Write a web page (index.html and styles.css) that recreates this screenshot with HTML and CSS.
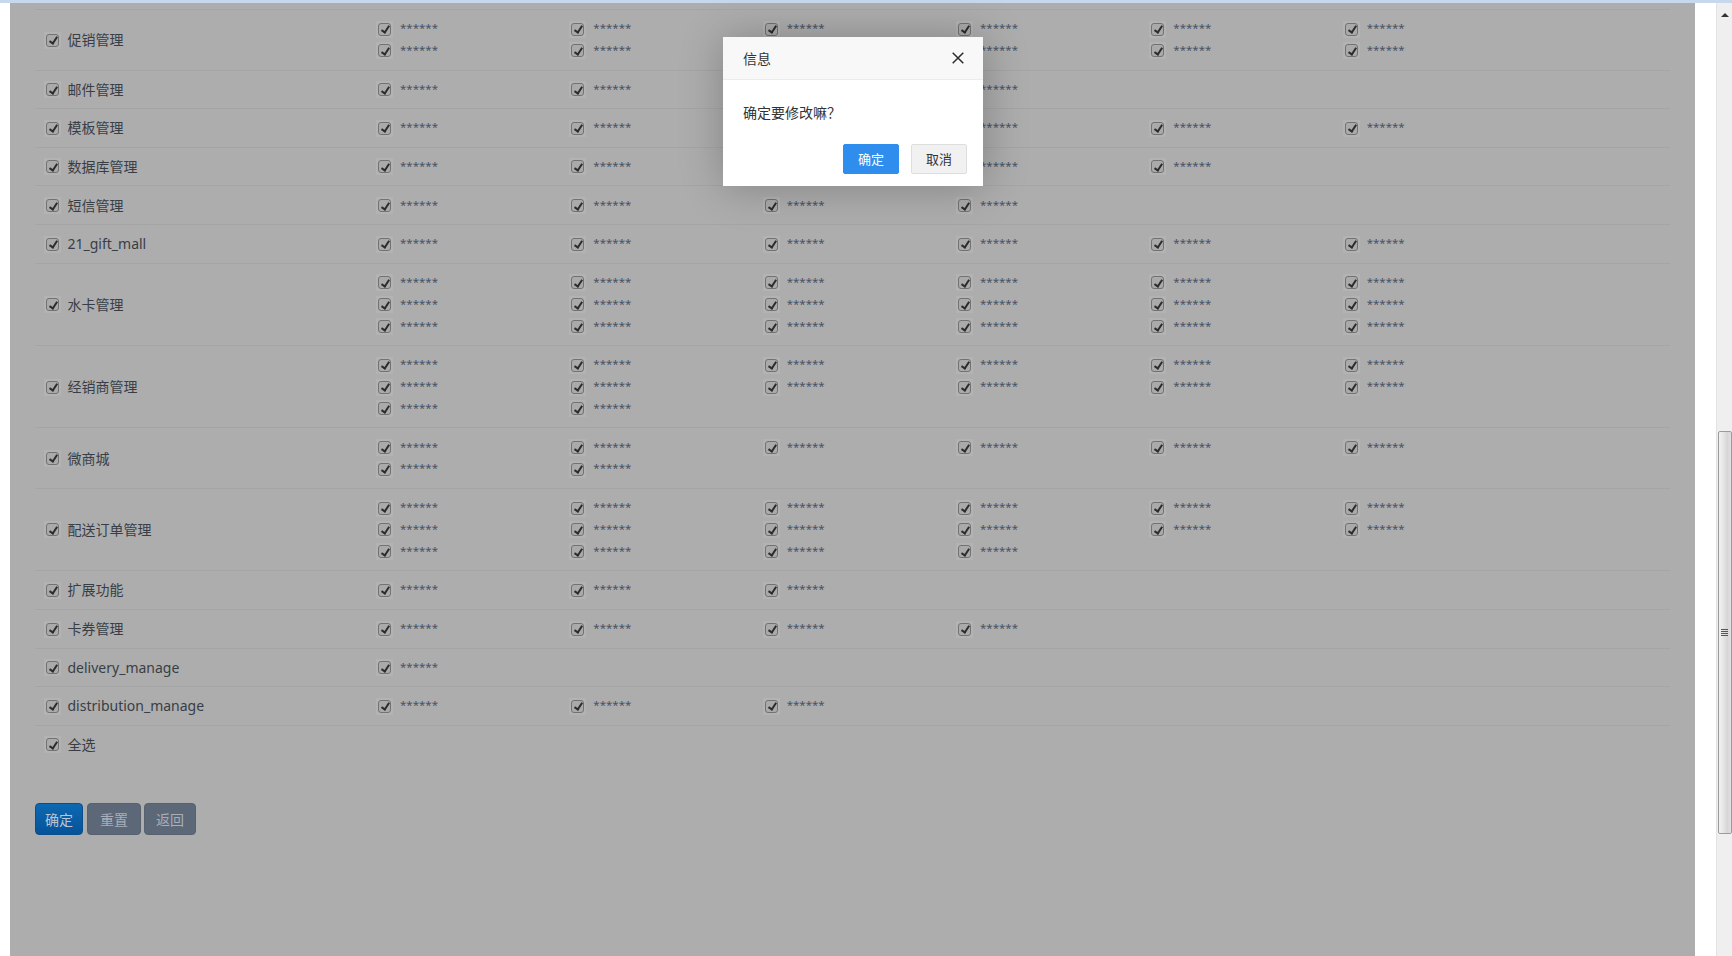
FILE: index.html
```html
<!DOCTYPE html>
<html lang="zh-CN">
<head>
<meta charset="utf-8">
<title>权限设置</title>
<link rel="stylesheet" href="styles.css">
</head>
<body>
<div class="topline"></div>
<div class="screen">
  <div class="gutter-l"></div>
  <main class="frame">
    <div class="toprule"></div>

    <div class="row">
      <label class="mod"><span class="cb"></span>促销管理</label>
      <div class="perms">
        <span class="perm"><span class="cb"></span><span class="stars">******</span></span>
        <span class="perm"><span class="cb"></span><span class="stars">******</span></span>
        <span class="perm"><span class="cb"></span><span class="stars">******</span></span>
        <span class="perm"><span class="cb"></span><span class="stars">******</span></span>
        <span class="perm"><span class="cb"></span><span class="stars">******</span></span>
        <span class="perm"><span class="cb"></span><span class="stars">******</span></span>
        <span class="perm"><span class="cb"></span><span class="stars">******</span></span>
        <span class="perm"><span class="cb"></span><span class="stars">******</span></span>
        <span class="perm"><span class="cb"></span><span class="stars">******</span></span>
        <span class="perm"><span class="cb"></span><span class="stars">******</span></span>
        <span class="perm"><span class="cb"></span><span class="stars">******</span></span>
        <span class="perm"><span class="cb"></span><span class="stars">******</span></span>
      </div>
    </div>

    <div class="row">
      <label class="mod"><span class="cb"></span>邮件管理</label>
      <div class="perms">
        <span class="perm"><span class="cb"></span><span class="stars">******</span></span>
        <span class="perm"><span class="cb"></span><span class="stars">******</span></span>
        <span class="perm"><span class="cb"></span><span class="stars">******</span></span>
        <span class="perm"><span class="cb"></span><span class="stars">******</span></span>
      </div>
    </div>

    <div class="row">
      <label class="mod"><span class="cb"></span>模板管理</label>
      <div class="perms">
        <span class="perm"><span class="cb"></span><span class="stars">******</span></span>
        <span class="perm"><span class="cb"></span><span class="stars">******</span></span>
        <span class="perm"><span class="cb"></span><span class="stars">******</span></span>
        <span class="perm"><span class="cb"></span><span class="stars">******</span></span>
        <span class="perm"><span class="cb"></span><span class="stars">******</span></span>
        <span class="perm"><span class="cb"></span><span class="stars">******</span></span>
      </div>
    </div>

    <div class="row">
      <label class="mod"><span class="cb"></span>数据库管理</label>
      <div class="perms">
        <span class="perm"><span class="cb"></span><span class="stars">******</span></span>
        <span class="perm"><span class="cb"></span><span class="stars">******</span></span>
        <span class="perm"><span class="cb"></span><span class="stars">******</span></span>
        <span class="perm"><span class="cb"></span><span class="stars">******</span></span>
        <span class="perm"><span class="cb"></span><span class="stars">******</span></span>
      </div>
    </div>

    <div class="row">
      <label class="mod"><span class="cb"></span>短信管理</label>
      <div class="perms">
        <span class="perm"><span class="cb"></span><span class="stars">******</span></span>
        <span class="perm"><span class="cb"></span><span class="stars">******</span></span>
        <span class="perm"><span class="cb"></span><span class="stars">******</span></span>
        <span class="perm"><span class="cb"></span><span class="stars">******</span></span>
      </div>
    </div>

    <div class="row">
      <label class="mod"><span class="cb"></span>21_gift_mall</label>
      <div class="perms">
        <span class="perm"><span class="cb"></span><span class="stars">******</span></span>
        <span class="perm"><span class="cb"></span><span class="stars">******</span></span>
        <span class="perm"><span class="cb"></span><span class="stars">******</span></span>
        <span class="perm"><span class="cb"></span><span class="stars">******</span></span>
        <span class="perm"><span class="cb"></span><span class="stars">******</span></span>
        <span class="perm"><span class="cb"></span><span class="stars">******</span></span>
      </div>
    </div>

    <div class="row">
      <label class="mod"><span class="cb"></span>水卡管理</label>
      <div class="perms">
        <span class="perm"><span class="cb"></span><span class="stars">******</span></span>
        <span class="perm"><span class="cb"></span><span class="stars">******</span></span>
        <span class="perm"><span class="cb"></span><span class="stars">******</span></span>
        <span class="perm"><span class="cb"></span><span class="stars">******</span></span>
        <span class="perm"><span class="cb"></span><span class="stars">******</span></span>
        <span class="perm"><span class="cb"></span><span class="stars">******</span></span>
        <span class="perm"><span class="cb"></span><span class="stars">******</span></span>
        <span class="perm"><span class="cb"></span><span class="stars">******</span></span>
        <span class="perm"><span class="cb"></span><span class="stars">******</span></span>
        <span class="perm"><span class="cb"></span><span class="stars">******</span></span>
        <span class="perm"><span class="cb"></span><span class="stars">******</span></span>
        <span class="perm"><span class="cb"></span><span class="stars">******</span></span>
        <span class="perm"><span class="cb"></span><span class="stars">******</span></span>
        <span class="perm"><span class="cb"></span><span class="stars">******</span></span>
        <span class="perm"><span class="cb"></span><span class="stars">******</span></span>
        <span class="perm"><span class="cb"></span><span class="stars">******</span></span>
        <span class="perm"><span class="cb"></span><span class="stars">******</span></span>
        <span class="perm"><span class="cb"></span><span class="stars">******</span></span>
      </div>
    </div>

    <div class="row">
      <label class="mod"><span class="cb"></span>经销商管理</label>
      <div class="perms">
        <span class="perm"><span class="cb"></span><span class="stars">******</span></span>
        <span class="perm"><span class="cb"></span><span class="stars">******</span></span>
        <span class="perm"><span class="cb"></span><span class="stars">******</span></span>
        <span class="perm"><span class="cb"></span><span class="stars">******</span></span>
        <span class="perm"><span class="cb"></span><span class="stars">******</span></span>
        <span class="perm"><span class="cb"></span><span class="stars">******</span></span>
        <span class="perm"><span class="cb"></span><span class="stars">******</span></span>
        <span class="perm"><span class="cb"></span><span class="stars">******</span></span>
        <span class="perm"><span class="cb"></span><span class="stars">******</span></span>
        <span class="perm"><span class="cb"></span><span class="stars">******</span></span>
        <span class="perm"><span class="cb"></span><span class="stars">******</span></span>
        <span class="perm"><span class="cb"></span><span class="stars">******</span></span>
        <span class="perm"><span class="cb"></span><span class="stars">******</span></span>
        <span class="perm"><span class="cb"></span><span class="stars">******</span></span>
      </div>
    </div>

    <div class="row">
      <label class="mod"><span class="cb"></span>微商城</label>
      <div class="perms">
        <span class="perm"><span class="cb"></span><span class="stars">******</span></span>
        <span class="perm"><span class="cb"></span><span class="stars">******</span></span>
        <span class="perm"><span class="cb"></span><span class="stars">******</span></span>
        <span class="perm"><span class="cb"></span><span class="stars">******</span></span>
        <span class="perm"><span class="cb"></span><span class="stars">******</span></span>
        <span class="perm"><span class="cb"></span><span class="stars">******</span></span>
        <span class="perm"><span class="cb"></span><span class="stars">******</span></span>
        <span class="perm"><span class="cb"></span><span class="stars">******</span></span>
      </div>
    </div>

    <div class="row">
      <label class="mod"><span class="cb"></span>配送订单管理</label>
      <div class="perms">
        <span class="perm"><span class="cb"></span><span class="stars">******</span></span>
        <span class="perm"><span class="cb"></span><span class="stars">******</span></span>
        <span class="perm"><span class="cb"></span><span class="stars">******</span></span>
        <span class="perm"><span class="cb"></span><span class="stars">******</span></span>
        <span class="perm"><span class="cb"></span><span class="stars">******</span></span>
        <span class="perm"><span class="cb"></span><span class="stars">******</span></span>
        <span class="perm"><span class="cb"></span><span class="stars">******</span></span>
        <span class="perm"><span class="cb"></span><span class="stars">******</span></span>
        <span class="perm"><span class="cb"></span><span class="stars">******</span></span>
        <span class="perm"><span class="cb"></span><span class="stars">******</span></span>
        <span class="perm"><span class="cb"></span><span class="stars">******</span></span>
        <span class="perm"><span class="cb"></span><span class="stars">******</span></span>
        <span class="perm"><span class="cb"></span><span class="stars">******</span></span>
        <span class="perm"><span class="cb"></span><span class="stars">******</span></span>
        <span class="perm"><span class="cb"></span><span class="stars">******</span></span>
        <span class="perm"><span class="cb"></span><span class="stars">******</span></span>
      </div>
    </div>

    <div class="row">
      <label class="mod"><span class="cb"></span>扩展功能</label>
      <div class="perms">
        <span class="perm"><span class="cb"></span><span class="stars">******</span></span>
        <span class="perm"><span class="cb"></span><span class="stars">******</span></span>
        <span class="perm"><span class="cb"></span><span class="stars">******</span></span>
      </div>
    </div>

    <div class="row">
      <label class="mod"><span class="cb"></span>卡券管理</label>
      <div class="perms">
        <span class="perm"><span class="cb"></span><span class="stars">******</span></span>
        <span class="perm"><span class="cb"></span><span class="stars">******</span></span>
        <span class="perm"><span class="cb"></span><span class="stars">******</span></span>
        <span class="perm"><span class="cb"></span><span class="stars">******</span></span>
      </div>
    </div>

    <div class="row">
      <label class="mod"><span class="cb"></span>delivery_manage</label>
      <div class="perms">
        <span class="perm"><span class="cb"></span><span class="stars">******</span></span>
      </div>
    </div>

    <div class="row">
      <label class="mod"><span class="cb"></span>distribution_manage</label>
      <div class="perms">
        <span class="perm"><span class="cb"></span><span class="stars">******</span></span>
        <span class="perm"><span class="cb"></span><span class="stars">******</span></span>
        <span class="perm"><span class="cb"></span><span class="stars">******</span></span>
      </div>
    </div>

    <div class="row row-last">
      <label class="mod"><span class="cb"></span>全选</label>
    </div>

    <div class="actions">
      <button class="btn btn-primary" type="button">确定</button>
      <button class="btn btn-dark btn-reset" type="button">重置</button>
      <button class="btn btn-dark btn-back" type="button">返回</button>
    </div>
  </main>
  <div class="gutter-r"></div>
  <div class="scrollbar">
    <span class="sb-up"></span>
    <div class="sb-space-top"></div>
    <div class="sb-thumb"><span class="sb-grip"></span></div>
  </div>
</div>

<div class="dialog">
  <div class="dlg-title">
    <span>信息</span>
    <svg class="dlg-close" width="12" height="12" viewBox="0 0 12 12"><path d="M0.7 0.7 L11.3 11.3 M11.3 0.7 L0.7 11.3" stroke="#2b2b2b" stroke-width="1.5" fill="none"/></svg>
  </div>
  <div class="dlg-content">确定要修改嘛？</div>
  <div class="dlg-btns">
    <a class="dlg-btn dlg-btn0">确定</a>
    <a class="dlg-btn dlg-btn1">取消</a>
  </div>
</div>
</body>
</html>
```

FILE: styles.css
```css
html, body {
  margin: 0;
  padding: 0;
  height: 956px;
  overflow: hidden;
  background: #ffffff;
  font-family: "Noto Sans", "Noto Sans CJK SC", sans-serif;
}

.topline {
  height: 3px;
  background: #c8d8ec;
}

.screen {
  display: flex;
  height: 953px;
}

.gutter-l {
  width: 10px;
  flex: none;
  background: #ffffff;
}

.gutter-r {
  width: 21px;
  flex: none;
  background: #ffffff;
}

.frame {
  width: 1685px;
  flex: none;
  background: #adadad;
  display: flex;
  flex-direction: column;
}

.toprule {
  height: 6px;
  margin: 0 25px;
  border-bottom: 1px solid #a5a5a5;
}

.row {
  display: flex;
  align-items: center;
  margin: 0 25px;
  padding: 8.2px 0 7.6px;
  border-bottom: 1px solid #a5a5a5;
}

.row-last {
  border-bottom: none;
}

.mod {
  width: 332px;
  flex: none;
  padding-left: 9px;
  display: flex;
  align-items: center;
  gap: 6.5px;
  font-size: 14px;
  line-height: 21.87px;
  height: 21.87px;
  color: #393e46;
}

.perms {
  display: grid;
  grid-template-columns: repeat(6, 193.33px);
  grid-auto-rows: 21.87px;
}

.perm {
  display: flex;
  align-items: center;
  gap: 7px;
}

.stars {
  font-family: "Noto Sans", sans-serif;
  font-size: 11.5px;
  line-height: 21.87px;
  color: #485265;
  position: relative;
  top: -1px;
}

.cb {
  width: 17px;
  height: 17px;
  flex: none;
  background: #b3b3b3;
  position: relative;
}

.cb::before {
  content: "";
  position: absolute;
  left: 2px;
  top: 2px;
  width: 11px;
  height: 11px;
  border: 1px solid #727272;
  border-radius: 3px;
  background: #aaaaaa;
}

.cb::after {
  content: "";
  position: absolute;
  left: 7px;
  top: 3.5px;
  width: 2.5px;
  height: 7px;
  border: solid #2c2c2c;
  border-width: 0 2px 2px 0;
  transform: rotate(33deg);
}

.actions {
  display: flex;
  gap: 4px;
  margin: 40px 25px 0;
}

.btn {
  height: 32px;
  border-radius: 4px;
  font-family: "Noto Sans CJK SC", "Noto Sans", sans-serif;
  font-size: 14px;
  padding: 0;
  cursor: pointer;
}

.btn-primary {
  width: 48px;
  background: linear-gradient(#0d68b2, #05539a);
  border: 1px solid #0a4e8c;
  color: #bcc6d2;
}

.btn-dark {
  background: #5c6778;
  border: 1px solid #58626f;
  color: #a9aeb7;
}

.btn-reset {
  width: 54px;
}

.btn-back {
  width: 52px;
  margin-left: -1px;
}

/* scrollbar */
.scrollbar {
  width: 16px;
  flex: none;
  background: #efefef;
  border-left: 1px solid #e3e3e3;
  box-sizing: border-box;
  display: flex;
  flex-direction: column;
  align-items: center;
}

.sb-up {
  margin-top: 10px;
  width: 0;
  height: 0;
  border-left: 4px solid transparent;
  border-right: 4px solid transparent;
  border-bottom: 4px solid #333;
}

.sb-space-top {
  height: 414px;
}

.sb-thumb {
  width: 14px;
  height: 403px;
  box-sizing: border-box;
  border: 1px solid #9b9b9b;
  border-radius: 2px;
  background: linear-gradient(to right, #f2f2f2 0%, #e6e6e6 35%, #d6d6d6 70%, #e2e2e2 100%);
  display: flex;
  align-items: center;
  justify-content: center;
}

.sb-grip {
  width: 7px;
  height: 7px;
  background: repeating-linear-gradient(#555 0 1px, transparent 1px 2px);
}

/* dialog */
.dialog {
  position: absolute;
  left: 723px;
  top: 37px;
  width: 260px;
  background: #ffffff;
  box-shadow: 1px 1px 40px rgba(0, 0, 0, 0.25);
  font-family: "Noto Sans CJK SC", "Noto Sans", sans-serif;
  color: #333;
}

.dlg-title {
  height: 42px;
  border-bottom: 1px solid #ececec;
  background: #f8f8f8;
  display: flex;
  align-items: center;
  justify-content: space-between;
  padding: 0 19px 0 20px;
  font-size: 14px;
}

.dlg-close {
  display: block;
}

.dlg-content {
  padding: 20px 20px 15px;
  font-size: 14px;
  line-height: 24px;
}

.dlg-btns {
  display: flex;
  justify-content: flex-end;
  gap: 12px;
  padding: 5px 16px 12px;
}

.dlg-btn {
  height: 28px;
  line-height: 28px;
  padding: 0 14px;
  border-radius: 2px;
  font-size: 13px;
  cursor: pointer;
}

.dlg-btn0 {
  background: #2e8ded;
  border: 1px solid #2e8ded;
  color: #fff;
}

.dlg-btn1 {
  background: #f1f1f1;
  border: 1px solid #dedede;
  color: #333;
}
```
